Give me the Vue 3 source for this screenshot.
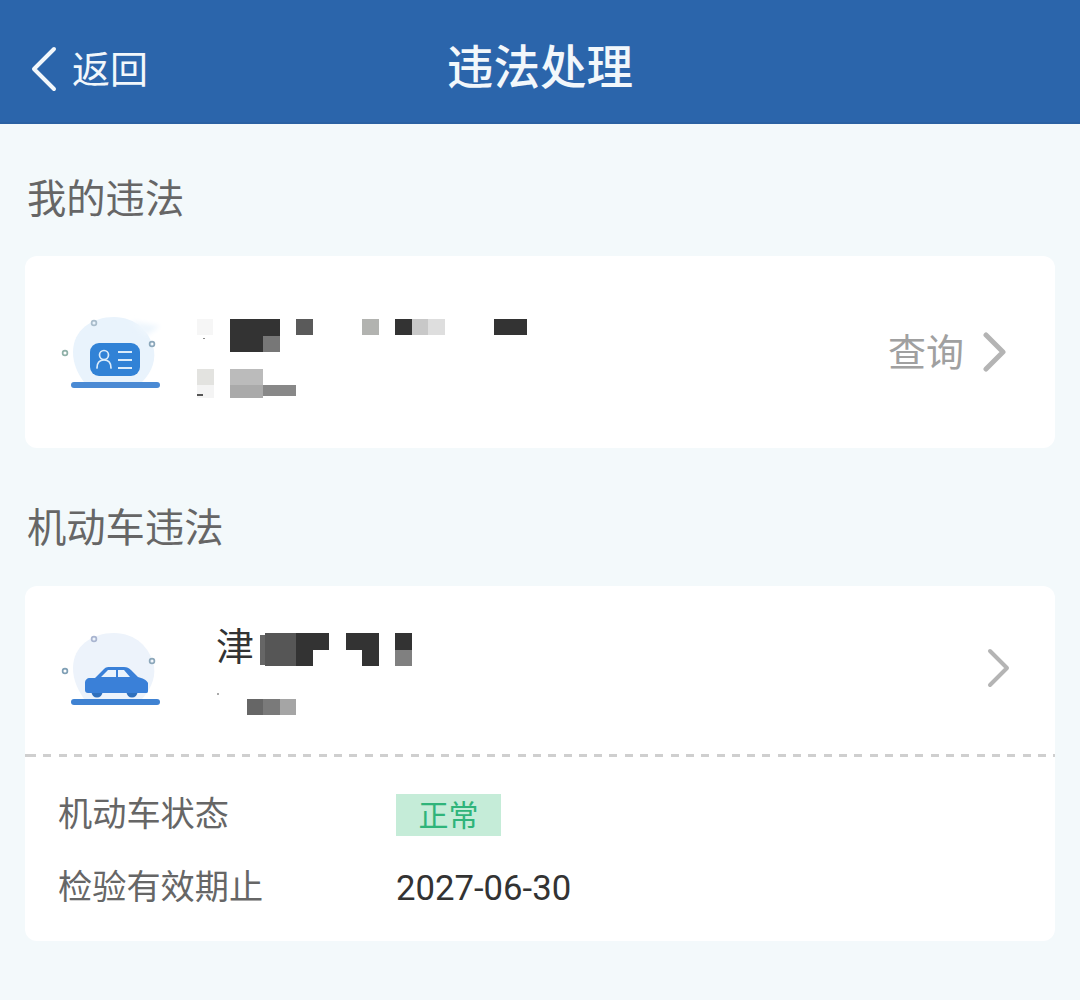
<script setup>
// pixelated blocks that hide the personal data, coordinates relative to the card
const licenceMosaic = [
  [172, 63, 16, 16, '#f6f6f6'],
  [178, 82, 2, 1, '#888888'],
  [205, 63, 50, 33, '#333333'],
  [238, 80, 17, 16, '#777777'],
  [271, 63, 17, 16, '#5a5a5a'],
  [337, 63, 17, 16, '#b2b3b0'],
  [370, 63, 17, 16, '#333333'],
  [387, 63, 17, 16, '#c8c8c8'],
  [403, 63, 17, 16, '#dedede'],
  [469, 63, 33, 16, '#333333'],
  [172, 113, 17, 16, '#e3e3e0'],
  [172, 129, 17, 13, '#f4f4f4'],
  [172, 138, 6, 2, '#555555'],
  [205, 113, 33, 16, '#bbbbbb'],
  [205, 129, 33, 13, '#aaaaaa'],
  [238, 129, 33, 11, '#888888']
]

const carMosaic = [
  [235, 49, 5, 30, '#666666'],
  [240, 47, 31, 33, '#565656'],
  [271, 47, 33, 17, '#333333'],
  [271, 64, 17, 16, '#333333'],
  [321, 47, 33, 17, '#333333'],
  [337, 64, 17, 16, '#333333'],
  [370, 47, 17, 17, '#333333'],
  [370, 64, 17, 16, '#808080'],
  [192, 107, 2, 2, '#aaaaaa'],
  [222, 113, 16, 16, '#666666'],
  [238, 113, 17, 16, '#7a7a7a'],
  [255, 113, 16, 16, '#a5a5a5']
]

const cellStyle = ([left, top, width, height, background]) => ({
  left: left + 'px',
  top: top + 'px',
  width: width + 'px',
  height: height + 'px',
  background
})
</script>

<template>
  <div class="page">
    <header class="topbar">
      <div class="back">
        <svg class="back-icon" width="28" height="46" viewBox="0 0 28 46">
          <path d="M24 3 L4 23 L24 43" fill="none" stroke="#f2f7fb" stroke-width="4" stroke-linecap="round" stroke-linejoin="round" />
        </svg>
        <span>返回</span>
      </div>
      <h1>违法处理</h1>
    </header>

    <main class="content">
      <h2>我的违法</h2>
      <section class="card licence-card">
        <svg class="illus" width="110" height="80" viewBox="0 0 110 80">
          <defs>
            <filter id="soft" x="-30%" y="-50%" width="160%" height="200%">
              <feGaussianBlur stdDeviation="2.500" />
            </filter>
          </defs>
          <path d="M19 40 C19 18 38 5 60 5 C82 5 96 20 100 38 C102 52 95 63 88 70 L30 70 C24 62 19 52 19 40Z" fill="#e9f3fc" />
          <path d="M76 9 L106 14 L92 24Z" fill="#eef6fd" filter="url(#soft)" />
          <circle cx="40" cy="11" r="2.400" fill="none" stroke="#a9bccb" stroke-width="1.700" />
          <circle cx="98" cy="32" r="2.400" fill="none" stroke="#8ca7ba" stroke-width="1.700" />
          <circle cx="11" cy="41" r="2.400" fill="none" stroke="#8fb0a8" stroke-width="1.700" />
          <rect x="36" y="31" width="50" height="33" rx="9" fill="#3182d6" />
          <circle cx="50" cy="43" r="4.500" fill="none" stroke="#dcecfa" stroke-width="1.700" />
          <path d="M43 56 C43 50 46 48 50 48 C54 48 57 50 57 56" fill="none" stroke="#dcecfa" stroke-width="1.700" stroke-linecap="round" />
          <path d="M64 40 H78 M64 48 H78 M64 56 H78" stroke="#dcecfa" stroke-width="2" />
          <rect x="17" y="70" width="89" height="6" rx="3" fill="#4a8ad4" />
        </svg>
        <div class="more">
          <span>查询</span>
          <svg width="24" height="40" viewBox="0 0 24 40">
            <path d="M3 3 L20 20 L3 37" fill="none" stroke="#b4b4b4" stroke-width="5" stroke-linecap="round" stroke-linejoin="round" />
          </svg>
        </div>
        <i v-for="(c, i) in licenceMosaic" :key="i" class="cell" :style="cellStyle(c)"></i>
      </section>

      <h2>机动车违法</h2>
      <section class="card car-card">
        <div class="car-row">
          <svg class="illus" width="110" height="80" viewBox="0 0 110 80">
            <path d="M19 38 C19 16 38 3 60 3 C82 3 96 18 100 36 C102 50 95 61 88 69 L30 69 C24 60 19 50 19 38Z" fill="#edf3fb" />
            <circle cx="40" cy="9" r="2.400" fill="none" stroke="#a9b5d0" stroke-width="1.700" />
            <circle cx="98" cy="31" r="2.400" fill="none" stroke="#8ca7ba" stroke-width="1.700" />
            <circle cx="11" cy="41" r="2.400" fill="none" stroke="#7f9fb5" stroke-width="1.700" />
            <circle cx="43" cy="62" r="5.500" fill="#2f70bd" />
            <circle cx="78" cy="62" r="5.500" fill="#2f70bd" />
            <path d="M31 53 C31 50 33 48 36 48 H41 L50 39 C52 37 54 37 56 37 H70 C73 37 75 38 77 40 L84 47 C88 48 93 50 94 53 L94 61 C94 63 93 63 91 63 H34 C32 63 31 62 31 60Z" fill="#3a80d8" />
            <path d="M47 47 L54 40 H62 V47Z M64 40 H70 L76 47 H64Z" fill="#eaf3fc" />
            <rect x="17" y="69" width="89" height="6" rx="3" fill="#3f82d2" />
          </svg>
          <span class="plate">津</span>
          <svg class="car-arrow" width="24" height="40" viewBox="0 0 24 40">
            <path d="M3 3 L20 20 L3 37" fill="none" stroke="#b4b4b4" stroke-width="4" stroke-linecap="round" stroke-linejoin="round" />
          </svg>
        </div>
        <div class="divider"></div>
        <div class="info">
          <div class="info-row">
            <span class="label">机动车状态</span>
            <span class="tag">正常</span>
          </div>
          <div class="info-row">
            <span class="label">检验有效期止</span>
            <span class="value">2027-06-30</span>
          </div>
        </div>
        <i v-for="(c, i) in carMosaic" :key="i" class="cell" :style="cellStyle(c)"></i>
      </section>
    </main>
  </div>
</template>

<style>
body {
  background: #f3f9fb;
}
</style>

<style scoped>
.page {
  min-height: 1000px;
  background: #f3f9fb;
  font-family: "Noto Sans CJK SC", "Noto Sans", sans-serif;
}

.topbar {
  position: relative;
  box-sizing: border-box;
  height: 124px;
  padding-top: 4px;
  background: #2b65ab;
  box-shadow: inset 0 -2px 0 #2a61a3;
  display: flex;
  align-items: center;
  justify-content: center;
  color: #f2f7fb;
}

.back {
  position: absolute;
  left: 30px;
  top: -2px;
  height: 136px;
  display: flex;
  align-items: center;
  gap: 14px;
  font-size: 38px;
}

.back-icon {
  display: block;
  margin-top: 6px;
}

.topbar h1 {
  margin: 0;
  font-size: 46.500px;
  font-weight: 500;
  line-height: 1;
}

.content {
  padding: 0 25px;
}

h2 {
  margin: 0;
  padding-left: 2px;
  font-size: 39.300px;
  font-weight: 400;
  line-height: 50px;
  color: #666;
}

.content > h2:first-child {
  padding-top: 47px;
  padding-bottom: 35px;
}

.licence-card + h2 {
  padding-top: 52px;
  padding-bottom: 36px;
}

.card {
  position: relative;
  background: #fff;
  border-radius: 12px;
}

.licence-card {
  height: 192px;
  display: flex;
  align-items: center;
  justify-content: space-between;
  padding: 0 48px 0 29px;
}

.illus {
  display: block;
  flex: none;
}

.more {
  display: flex;
  align-items: center;
  gap: 19px;
  font-size: 38px;
  color: #a0a0a0;
}

.more span {
  margin-top: -6px;
}

.more svg {
  display: block;
}

.car-card {
  height: 355px;
}

.car-row {
  height: 168px;
  display: flex;
  align-items: center;
  padding: 0 44px 0 29px;
}

.plate {
  margin-left: 52px;
  margin-top: -54px;
  font-size: 38px;
  color: #333;
}

.car-arrow {
  display: block;
  margin-left: auto;
  margin-top: -4px;
}

.divider {
  height: 3px;
  background: repeating-linear-gradient(90deg, #cfcfcf 0 8px, transparent 8px 15.3px);
  background-position: 3px 0;
}

.info {
  padding: 37px 33px 0;
  display: flex;
  flex-direction: column;
  gap: 31px;
}

.info-row {
  display: flex;
  align-items: center;
  height: 42px;
}

.label {
  width: 338px;
  margin-top: -8px;
  font-size: 34.200px;
  color: #666;
}

.tag {
  width: 105px;
  height: 42px;
  line-height: 38px;
  text-align: center;
  font-size: 30px;
  color: #2fb47a;
  background: #c5ecd8;
}

.value {
  font-family: Roboto, "Noto Sans", sans-serif;
  font-size: 34.700px;
  color: #333;
}

.cell {
  position: absolute;
  display: block;
}
</style>
